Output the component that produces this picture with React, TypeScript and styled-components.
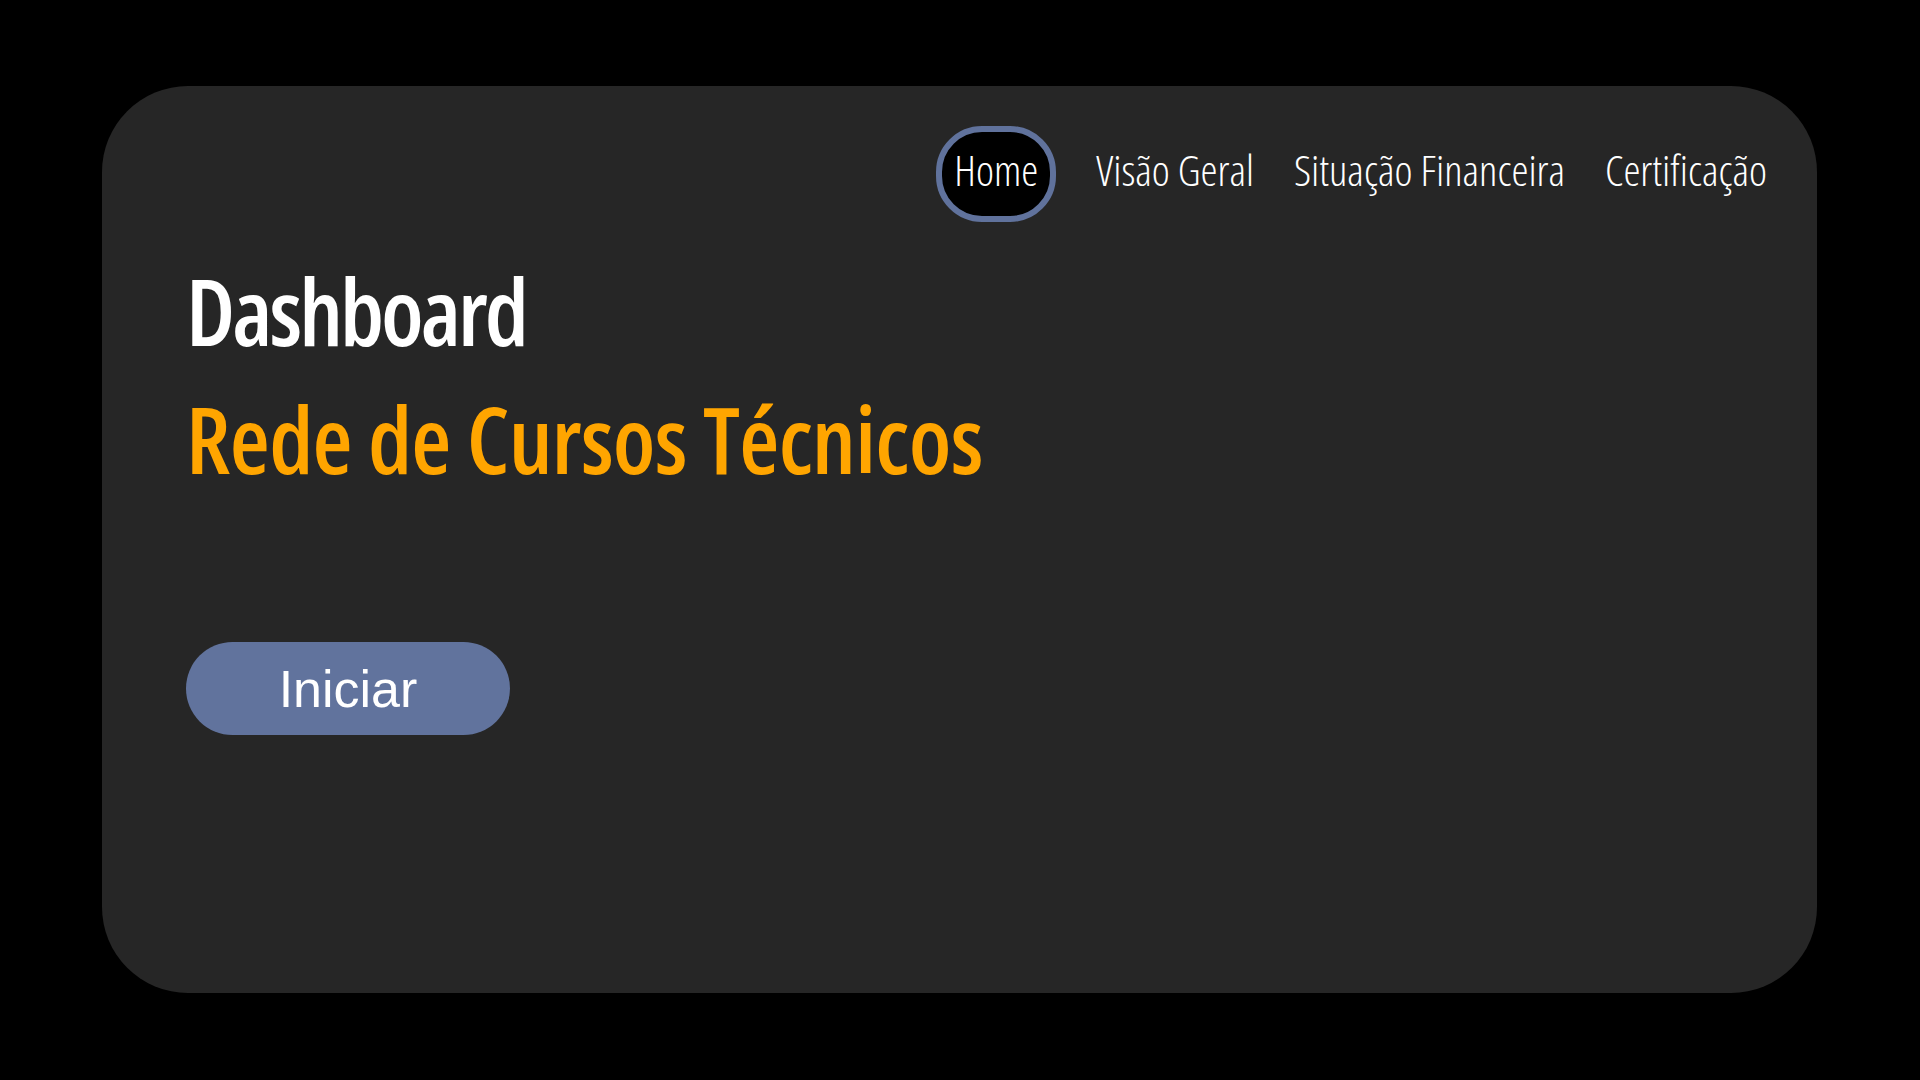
import React from "react";
import styled, { createGlobalStyle } from "styled-components";

const GlobalStyle = createGlobalStyle`
  html, body {
    margin: 0;
    background-color: #000000;
  }
`;

const Page = styled.div`
  width: 1920px;
  height: 1080px;
  padding: 86px 103px 87px 102px;
  box-sizing: border-box;
  background-color: #000000;
`;

const Card = styled.main`
  height: 100%;
  border-radius: 86px;
  background-color: #262626;
  padding: 40px 50px 0 84px;
  box-sizing: border-box;
  display: flex;
  flex-direction: column;
`;

const Nav = styled.nav`
  display: flex;
  justify-content: flex-end;
  align-items: center;
  gap: 40px;
`;

const NavItem = styled.a<{ $active?: boolean }>`
  height: 96px;
  box-sizing: border-box;
  display: flex;
  align-items: center;
  padding: ${(p) => (p.$active ? "0 12px 8px" : "0 0 8px")};
  border: ${(p) => (p.$active ? "6px solid #60729c" : "none")};
  border-radius: 46px;
  background-color: ${(p) => (p.$active ? "#000000" : "transparent")};
  font-family: "Open Sans", sans-serif;
  font-stretch: 75%;
  font-size: 43px;
  line-height: 76px;
  font-weight: 300;
  color: #ffffff;
  text-decoration: none;
  cursor: pointer;
`;

const Hero = styled.section`
  margin-top: 25px;
  display: flex;
  flex-direction: column;
  align-items: flex-start;
`;

const Title = styled.h1<{ $accent?: boolean }>`
  margin: 0;
  font-family: "Open Sans", sans-serif;
  font-stretch: 75%;
  font-size: 92px;
  line-height: 128px;
  font-weight: 600;
  letter-spacing: ${(p) => (p.$accent ? "-0.7px" : "-3px")};
  color: ${(p) => (p.$accent ? "#ffa500" : "#ffffff")};
`;

const StartButton = styled.button`
  margin-top: 139px;
  width: 324px;
  height: 93px;
  border: none;
  border-radius: 47px;
  background-color: #61739d;
  color: #ffffff;
  font-family: "Liberation Sans", Arial, sans-serif;
  font-size: 52px;
  cursor: pointer;
`;

const links = ["Home", "Visão Geral", "Situação Financeira", "Certificação"];

export default function App() {
  return (
    <Page>
      <GlobalStyle />
      <Card>
        <Nav>
          {links.map((label, i) => (
            <NavItem key={label} $active={i === 0}>
              {label}
            </NavItem>
          ))}
        </Nav>
        <Hero>
          <Title>Dashboard</Title>
          <Title $accent>Rede de Cursos Técnicos</Title>
          <StartButton>Iniciar</StartButton>
        </Hero>
      </Card>
    </Page>
  );
}
